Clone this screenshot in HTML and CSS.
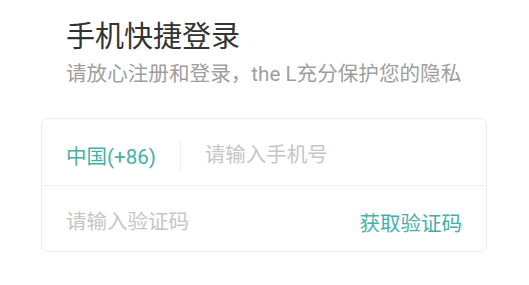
FILE: index.html
```html
<!DOCTYPE html>
<html lang="zh-CN">
<head>
    <meta charset="UTF-8">
    <meta name="viewport" content="width=device-width, initial-scale=1.0">
    <title>手机快捷登录</title>
    <link rel="stylesheet" href="styles.css">
</head>
<body>
    <div class="page">
        <h1 class="title">手机快捷登录</h1>
        <p class="subtitle">请放心注册和登录，the L充分保护您的隐私</p>

        <form class="card">
            <div class="row">
                <span class="country">中国(+86)</span>
                <span class="sep"></span>
                <input type="tel" class="field" placeholder="请输入手机号">
            </div>
            <div class="row row-code">
                <input type="text" class="field" placeholder="请输入验证码">
                <a href="#" class="get-code">获取验证码</a>
            </div>
        </form>
    </div>
</body>
</html>
```

FILE: styles.css
```css
body {
    margin: 0;
    background-color: #fff;
    font-family: Roboto, "Noto Sans CJK SC", sans-serif;
}
.page {
    padding: 17px 42px 0 41px;
}
.title {
    margin: 0 0 0 25px;
    font-size: 29px;
    font-weight: normal;
    line-height: 40px;
    color: #333;
}
.subtitle {
    margin: 2px 0 0 25px;
    font-size: 20.6px;
    line-height: 30px;
    color: #9e9e9e;
}
.card {
    margin-top: 29px;
    width: 444px;
    border: 1px solid #ececec;
    border-radius: 7px;
}
.row {
    box-sizing: border-box;
    display: flex;
    align-items: center;
    height: 66px;
    padding: 6px 24px 0;
}
.row + .row {
    border-top: 1px solid #f0f0f0;
}
.country {
    font-size: 20.5px;
    color: #45b0a6;
}
.sep {
    width: 1px;
    height: 31px;
    margin: 0 24px;
    background-color: #eee;
}
.field {
    flex: 1;
    min-width: 0;
    padding: 0;
    border: none;
    outline: none;
    font-family: inherit;
    font-size: 20.5px;
    color: #333;
    background: transparent;
}
.field::placeholder {
    color: #c6c6c6;
}
.get-code {
    font-size: 20.5px;
    color: #45b0a6;
    text-decoration: none;
}
```
